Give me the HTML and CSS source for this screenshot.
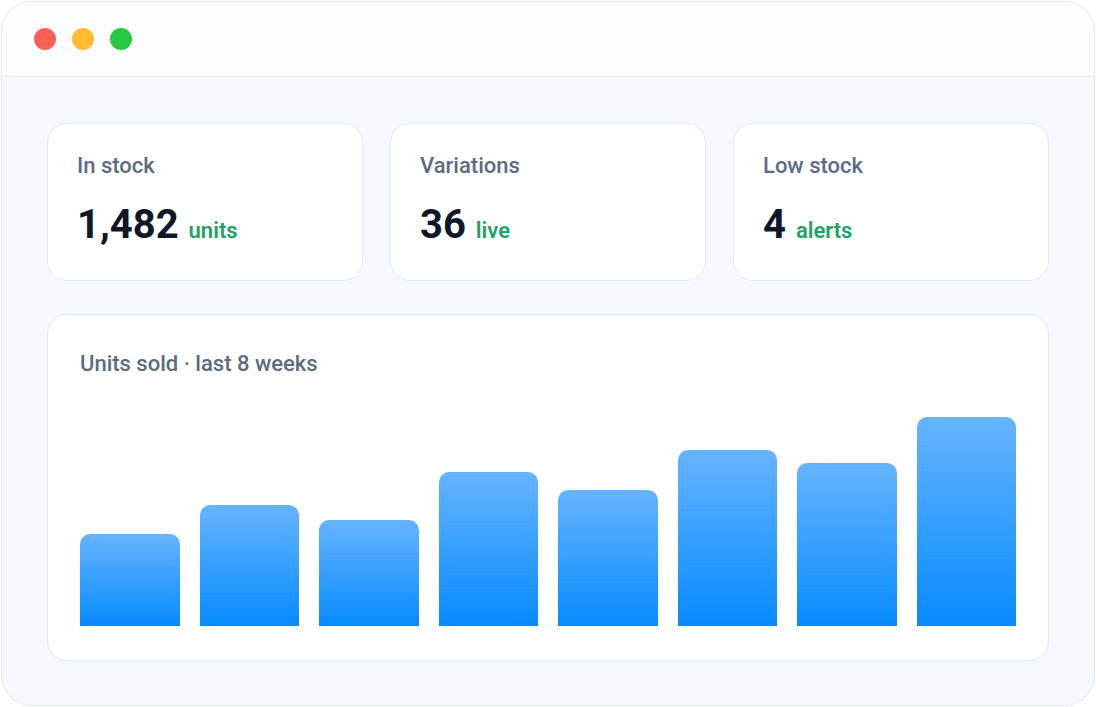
FILE: index.html
```html
<!DOCTYPE html>
<html>
<head>
    <title>Inventory overview</title>
    <link rel="stylesheet" href="styles.css">
</head>
<body>
    <div class="window">
        <div class="titlebar">
            <span class="dot red"></span>
            <span class="dot yellow"></span>
            <span class="dot green"></span>
        </div>

        <div class="content">
            <div class="stats">
                <div class="card">
                    <div class="label">In stock</div>
                    <div class="value">1,482 <span class="unit">units</span></div>
                </div>
                <div class="card">
                    <div class="label">Variations</div>
                    <div class="value">36 <span class="unit">live</span></div>
                </div>
                <div class="card">
                    <div class="label">Low stock</div>
                    <div class="value">4 <span class="unit">alerts</span></div>
                </div>
            </div>

            <div class="chart-card">
                <div class="label">Units sold · last 8 weeks</div>
                <div class="bars">
                    <div class="bar" style="height: 92px"></div>
                    <div class="bar" style="height: 121px"></div>
                    <div class="bar" style="height: 106px"></div>
                    <div class="bar" style="height: 154px"></div>
                    <div class="bar" style="height: 136px"></div>
                    <div class="bar" style="height: 176px"></div>
                    <div class="bar" style="height: 163px"></div>
                    <div class="bar" style="height: 209px"></div>
                </div>
            </div>
        </div>
    </div>
</body>
</html>
```

FILE: styles.css
```css
body {
    margin: 0;
    padding: 1px;
    background: #ffffff;
    font-family: Roboto, "Liberation Sans", sans-serif;
}

.window {
    width: 1094px;
    height: 705px;
    box-sizing: border-box;
    border: 1px solid #e3e8f0;
    border-radius: 30px;
    background: #f5f8fd;
    overflow: hidden;
}

.titlebar {
    height: 74px;
    display: flex;
    align-items: center;
    gap: 16px;
    padding-left: 32px;
    background: #fcfdfe;
    border-bottom: 1px solid #e6ebf2;
}

.dot {
    width: 22px;
    height: 22px;
    border-radius: 50%;
}

.red { background: #ff5f57; }
.yellow { background: #febc2e; }
.green { background: #28c840; }

.content {
    padding: 46px 45px 45px;
    display: flex;
    flex-direction: column;
    gap: 33px;
}

.stats {
    display: grid;
    grid-template-columns: repeat(3, 1fr);
    gap: 27px;
}

.card {
    background: #ffffff;
    border: 1px solid #e5e9f1;
    border-radius: 20px;
    padding: 30px 29px 25px;
    display: flex;
    flex-direction: column;
    gap: 23px;
}

.label {
    font-size: 22px;
    line-height: 24px;
    font-weight: 500;
    color: #5b6b82;
}

.value {
    font-size: 40px;
    line-height: 48px;
    font-weight: 700;
    color: #0f172a;
}

.unit {
    font-size: 22px;
    font-weight: 600;
    color: #1ba463;
}

.chart-card {
    background: #ffffff;
    border: 1px solid #e5e9f1;
    border-radius: 20px;
    padding: 37px 32px 34px;
}

.bars {
    height: 250px;
    display: flex;
    align-items: flex-end;
    gap: 20px;
}

.bar {
    flex: 1;
    border-radius: 10px 10px 0 0;
    background: linear-gradient(to bottom, #66b4fe, #078bff);
}
```
